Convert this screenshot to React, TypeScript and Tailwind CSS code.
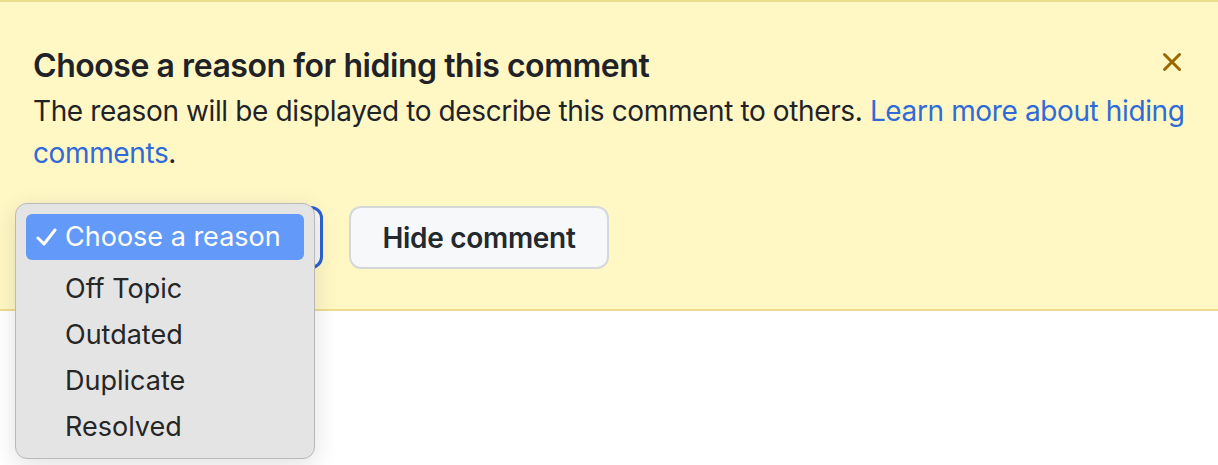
import React from "react";

export default function App() {
  const items = ["Off Topic", "Outdated", "Duplicate", "Resolved"];
  return (
    <div
      className="relative w-[1218px] h-[465px] bg-white overflow-hidden"
      style={{ fontFamily: "Inter, 'Noto Sans', 'Liberation Sans', sans-serif" }}
    >
      <div className="bg-[#fff8c5] border-t-2 border-b-2 border-[#eedc8e] pl-[33px] pr-[22px] pt-[40px] pb-[40px]">
        <div className="flex items-start justify-between pr-[8px]">
          <h2 className="text-[32px] leading-[48px] font-semibold text-[#1f2328] tracking-[-0.45px]">
            Choose a reason for hiding this comment
          </h2>
          <button className="w-[32px] h-[32px] mt-[4px] text-[#9a6700] flex items-center justify-center">
            <svg width="32" height="32" viewBox="0 0 16 16" fill="currentColor">
              <path d="M3.72 3.72a.75.75 0 0 1 1.06 0L8 6.94l3.22-3.22a.749.749 0 0 1 1.275.326.749.749 0 0 1-.215.734L9.06 8l3.22 3.22a.749.749 0 0 1-.326 1.275.749.749 0 0 1-.734-.215L8 9.06l-3.22 3.22a.751.751 0 0 1-1.042-.018.751.751 0 0 1-.018-1.042L6.94 8 3.72 4.78a.75.75 0 0 1 0-1.06Z" />
            </svg>
          </button>
        </div>
        <p className="text-[28px] leading-[42px] text-[#1f2328] tracking-[-0.38px]">
          The reason will be displayed to describe this comment to others.{" "}
          <a className="text-[#2f6ad8]">Learn more about hiding</a>{" "}
          <a className="text-[#2f6ad8]">comments</a>.
        </p>
        <div className="flex items-center gap-[26px] mt-[32px]">
          <div className="w-[290px] h-[63px] rounded-[12px] border-[3px] border-[#2d63d0] bg-[#f6f8fa]" />
          <button className="w-[260px] h-[63px] rounded-[12px] border-2 border-[#d5d8da] bg-[#f6f8fa] text-[28px] font-semibold text-[#24292f] tracking-[-0.3px]">
            Hide comment
          </button>
        </div>
      </div>

      <div className="absolute left-[15px] top-[203px] w-[300px] h-[256px] rounded-[12px] border border-[#b9b9b9] bg-[#e4e4e4] shadow-[0_6px_24px_rgba(0,0,0,0.12)] px-[10px] pt-[10px]">
        <div className="h-[46px] rounded-[6px] bg-[#6399f8] flex items-center text-white text-[27px] mb-[6px]">
          <span className="w-[39px] flex justify-center pl-[3px]">
            <svg width="22" height="20" viewBox="0 0 22 20" fill="none" stroke="white" strokeWidth="3" strokeLinecap="round" strokeLinejoin="round">
              <path d="M2 11 L8 17 L19 3" />
            </svg>
          </span>
          <span>Choose a reason</span>
        </div>
        {items.map((t) => (
          <div key={t} className="h-[46px] flex items-center pl-[39px] text-[27px] text-[#262626]">
            {t}
          </div>
        ))}
      </div>
    </div>
  );
}
